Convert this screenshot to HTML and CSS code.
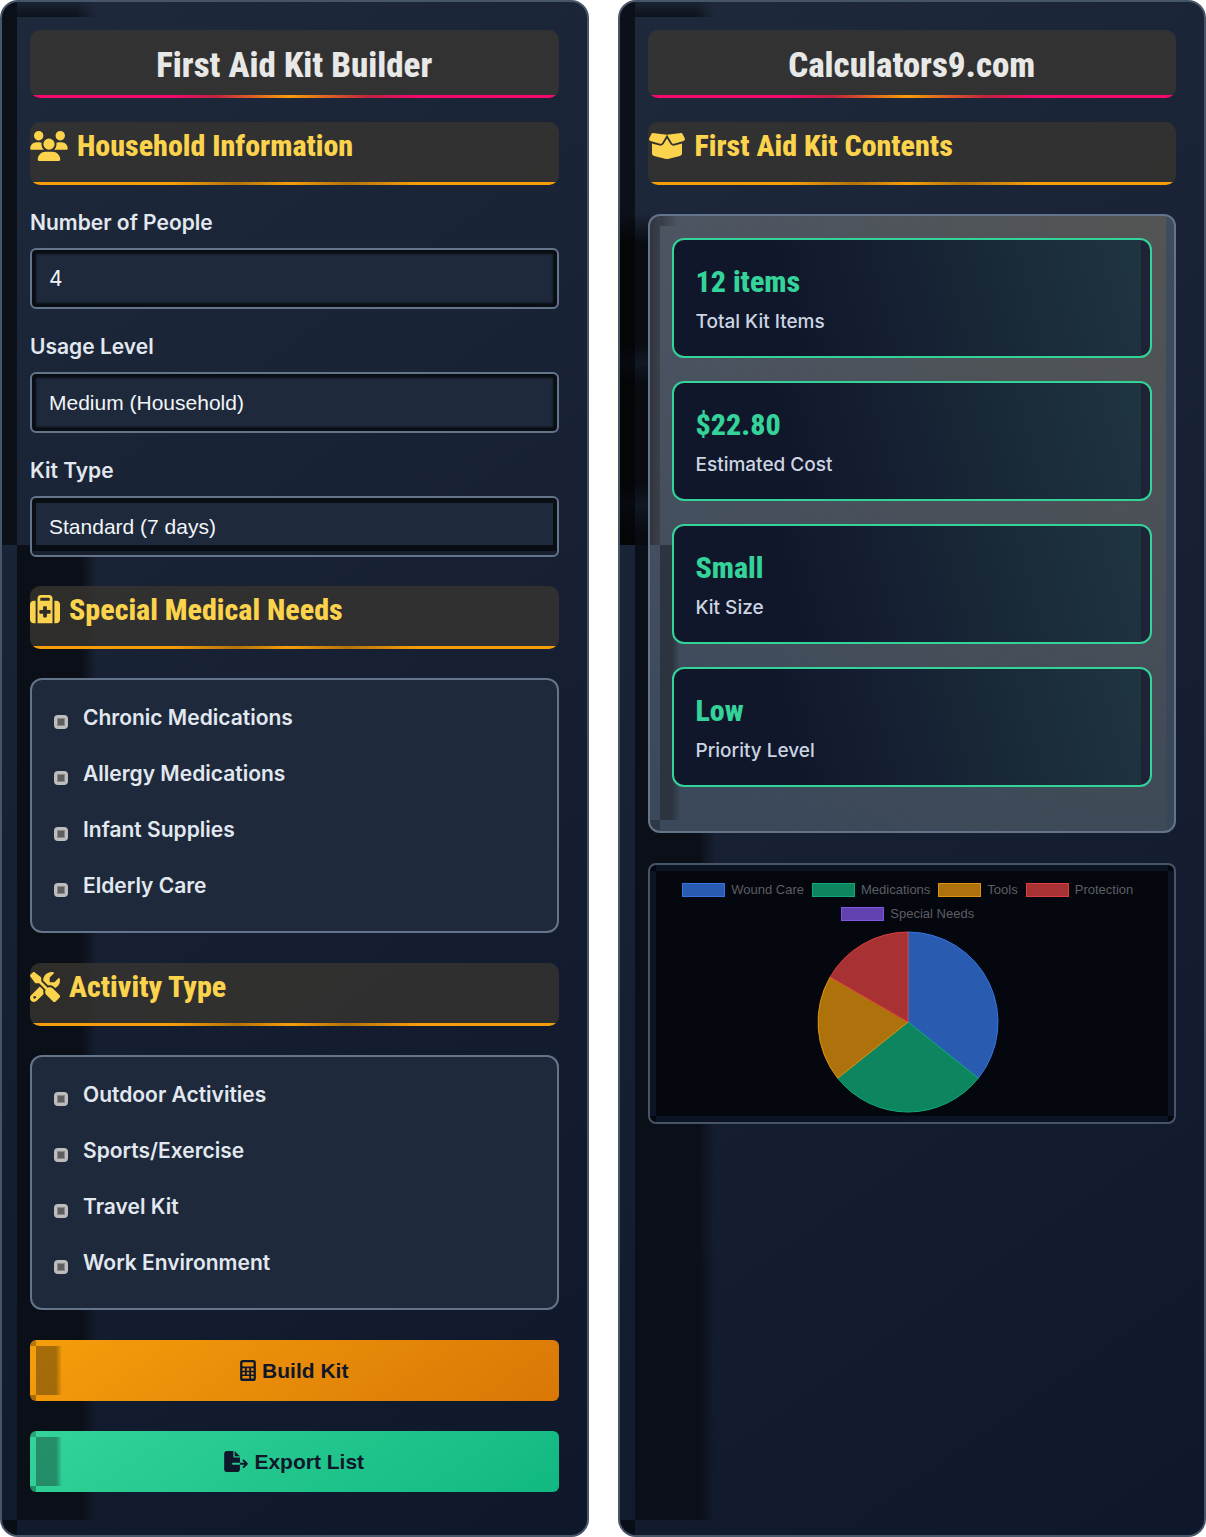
FILE: index.html
```html
<!DOCTYPE html>
<html lang="en">
<head>
    <meta charset="UTF-8">
    <title>First Aid Kit Builder</title>
    <link rel="stylesheet" href="styles.css">
</head>
<body>
<div class="container">
    <form class="panel">
        <h1 class="title">First Aid Kit Builder</h1>
        <h2 class="section-title">
            <svg class="icon icon-wide" viewBox="0 0 640 512"><path d="M144 0a80 80 0 1 1 0 160A80 80 0 1 1 144 0zM512 0a80 80 0 1 1 0 160A80 80 0 1 1 512 0zM0 298.7C0 239.8 47.8 192 106.7 192h42.7c15.9 0 31 3.5 44.6 9.7c-1.3 7.2-1.9 14.7-1.9 22.3c0 38.2 16.8 72.5 43.3 96c-.2 0-.4 0-.7 0H21.3C9.6 320 0 310.4 0 298.7zM405.3 320c-.2 0-.4 0-.7 0c26.6-23.5 43.3-57.8 43.3-96c0-7.6-.7-15-1.9-22.3c13.6-6.3 28.7-9.7 44.6-9.7h42.7C592.2 192 640 239.8 640 298.7c0 11.8-9.6 21.3-21.3 21.3H405.3zM224 224a96 96 0 1 1 192 0 96 96 0 1 1 -192 0zM128 485.3C128 411.7 187.7 352 261.3 352H378.7C452.3 352 512 411.7 512 485.3c0 14.7-11.9 26.7-26.7 26.7H154.7c-14.7 0-26.7-11.9-26.7-26.7z"/></svg>
            Household Information
        </h2>
        <div class="form-group">
            <label for="people">Number of People</label>
            <input class="field" type="text" inputmode="numeric" id="people" value="4">
        </div>
        <div class="form-group">
            <label for="usage">Usage Level</label>
            <select class="field" id="usage">
                <option>Light (Personal)</option>
                <option selected>Medium (Household)</option>
                <option>Heavy (Group)</option>
            </select>
        </div>
        <div class="form-group">
            <label for="kitType">Kit Type</label>
            <select class="field field-last" id="kitType">
                <option>Basic (3 days)</option>
                <option selected>Standard (7 days)</option>
                <option>Extended (14 days)</option>
            </select>
        </div>

        <h2 class="section-title">
            <svg class="icon" viewBox="0 0 512 512"><path d="M184 48H328c4.4 0 8 3.6 8 8V96H176V56c0-4.4 3.6-8 8-8zm-56 8V96v32V480H384V128 96 56c0-30.9-25.1-56-56-56H184c-30.9 0-56 25.1-56 56zM96 96H64C28.7 96 0 124.7 0 160V416c0 35.3 28.7 64 64 64H96V96zM416 480h32c35.3 0 64-28.7 64-64V160c0-35.3-28.7-64-64-64H416V480zM224 208c0-8.8 7.2-16 16-16h32c8.8 0 16 7.2 16 16v48h48c8.8 0 16 7.2 16 16v32c0 8.8-7.2 16-16 16H288v48c0 8.8-7.2 16-16 16H240c-8.8 0-16-7.2-16-16V320H176c-8.8 0-16-7.2-16-16V272c0-8.8 7.2-16 16-16h48V208z"/></svg>
            Special Medical Needs
        </h2>
        <div class="checks">
            <label><input type="checkbox">Chronic Medications</label>
            <label><input type="checkbox">Allergy Medications</label>
            <label><input type="checkbox">Infant Supplies</label>
            <label><input type="checkbox">Elderly Care</label>
        </div>

        <h2 class="section-title">
            <svg class="icon" viewBox="0 0 512 512"><path d="M78.6 5C69.1-2.4 55.6-1.5 47 7L7 47c-8.5 8.5-9.4 22-2.1 31.6l80 104c4.5 5.9 11.6 9.4 19 9.4h54.1l109 109c-14.7 29-10 65.4 14.3 89.6l112 112c12.5 12.5 32.8 12.5 45.3 0l64-64c12.5-12.5 12.5-32.8 0-45.3l-112-112c-24.2-24.2-60.6-29-89.6-14.3l-109-109V104c0-7.5-3.5-14.5-9.4-19L78.6 5zM19.9 396.1C7.2 408.8 0 426.1 0 444.1C0 481.6 30.4 512 67.9 512c18 0 35.3-7.2 48-19.9L233.7 374.3c-7.8-20.9-9-43.6-3.6-65.1l-61.7-61.7L19.9 396.1zM512 144c0-10.5-1.1-20.7-3.2-30.5c-2.4-11.2-16.1-14.1-24.2-6l-63.9 63.9c-3 3-7.1 4.7-11.3 4.7H352c-8.8 0-16-7.2-16-16V102.6c0-4.2 1.7-8.3 4.7-11.3l63.9-63.9c8.1-8.1 5.2-21.8-6-24.2C388.7 1.1 378.5 0 368 0C288.5 0 224 64.5 224 144l0 .8 85.3 85.3c36-9.1 75.8 .5 104 28.7L429 274.5c49-23 83-72.8 83-130.5zM56 432a24 24 0 1 1 48 0 24 24 0 1 1 -48 0z"/></svg>
            Activity Type
        </h2>
        <div class="checks">
            <label><input type="checkbox">Outdoor Activities</label>
            <label><input type="checkbox">Sports/Exercise</label>
            <label><input type="checkbox">Travel Kit</label>
            <label><input type="checkbox">Work Environment</label>
        </div>

        <button class="btn btn-build" type="button">
            <svg class="btn-icon" viewBox="0 0 384 512"><path fill-rule="evenodd" d="M64 0H320a64 64 0 0 1 64 64V448a64 64 0 0 1-64 64H64a64 64 0 0 1-64-64V64A64 64 0 0 1 64 0zM80 56a24 24 0 0 0-24 24v56a24 24 0 0 0 24 24H304a24 24 0 0 0 24-24V80a24 24 0 0 0-24-24zM56 200h60v60H56zM162 200h60v60h-60zM268 200h60v60h-60zM56 296h60v60H56zM162 296h60v60h-60zM268 296h60v60h-60zM56 392h166v60H56zM268 392h60v60h-60z"/></svg>
            Build Kit
        </button>
        <button class="btn btn-export" type="button">
            <svg class="btn-icon btn-icon-wide" viewBox="0 0 576 512"><path d="M0 64C0 28.7 28.7 0 64 0H224V128c0 17.7 14.3 32 32 32H384V288H216c-13.3 0-24 10.7-24 24s10.7 24 24 24H384V448c0 35.3-28.7 64-64 64H64c-35.3 0-64-28.7-64-64V64zM384 336V288H494.1l-39-39c-9.4-9.4-9.4-24.6 0-33.9s24.6-9.4 33.9 0l80 80c9.4 9.4 9.4 24.6 0 33.9l-80 80c-9.4 9.4-24.6 9.4-33.9 0s-9.4-24.6 0-33.9l39-39H384zm0-208H256V0L384 128z"/></svg>
            Export List
        </button>
    </form>

    <div class="panel panel-results">
        <h1 class="title">Calculators9.com</h1>
        <h2 class="section-title">
            <svg class="icon icon-wide" viewBox="0 0 640 512"><path d="M58.9 42.1c3-6.1 9.6-9.6 16.3-8.7L320 64 564.8 33.4c6.7-.8 13.3 2.7 16.3 8.7l41.7 83.4c9 17.9-.6 39.6-19.8 45.1L439.6 217.3c-13.9 4-28.8-1.9-36.2-14.3L320 64 236.6 203c-7.4 12.4-22.3 18.3-36.2 14.3L37.1 170.6c-19.3-5.5-28.8-27.2-19.8-45.1L58.9 42.1zM321.1 128l54.9 91.4c14.9 24.8 44.6 36.6 72.5 28.6L576 211.6v167c0 22-15 41.2-36.4 46.6l-204.1 51c-10.2 2.6-20.9 2.6-31 0l-204.1-51C79 419.7 64 400.5 64 378.5v-167L191.6 248c27.8 8 57.6-3.8 72.5-28.6L318.9 128h2.2z"/></svg>
            First Aid Kit Contents
        </h2>
        <div class="results">
            <div class="card">
                <div class="card-value">12 items</div>
                <div class="card-label">Total Kit Items</div>
            </div>
            <div class="card">
                <div class="card-value">$22.80</div>
                <div class="card-label">Estimated Cost</div>
            </div>
            <div class="card">
                <div class="card-value">Small</div>
                <div class="card-label">Kit Size</div>
            </div>
            <div class="card">
                <div class="card-value">Low</div>
                <div class="card-label">Priority Level</div>
            </div>
        </div>
        <div class="chart">
            <ul class="legend">
                <li><span class="swatch blue"></span>Wound Care</li>
                <li><span class="swatch green"></span>Medications</li>
                <li><span class="swatch orange"></span>Tools</li>
                <li><span class="swatch red"></span>Protection</li>
                <li><span class="swatch purple"></span>Special Needs</li>
            </ul>
            <svg class="pie" viewBox="-91 -91 182 182">
                <path class="blue" d="M0 0V-90A90 90 0 0 1 70.3 56.2z"/>
                <path class="green" d="M0 0L70.3 56.2A90 90 0 0 1 -70.3 56.2z"/>
                <path class="orange" d="M0 0L-70.3 56.2A90 90 0 0 1 -77.9 -45z"/>
                <path class="red" d="M0 0L-77.9 -45A90 90 0 0 1 0 -90z"/>
            </svg>
        </div>
    </div>
</div>
</body>
</html>
```
FILE: styles.css
```css
*{
    margin:0;
    padding:0;
    box-sizing:border-box;
}
body{
    background:#fff;
    color:#e2e8f0;
    font-family:Inter, "Liberation Sans", sans-serif;
}
ul{
    list-style:none;
}
.container{
    display:grid;
    grid-template-columns:1fr 1fr;
    gap:29px;
}
.panel{
    padding:28px 28px 43px;
    border:2px solid #475569;
    border-radius:18px;
    background:
        linear-gradient(#0c1018, #0c1018) 0 0 / 15px 543px no-repeat,
        linear-gradient(90deg, #0b0f17 0, #0b0f17 64px, transparent 80px) 15px 543px / 80px calc(100% - 558px) no-repeat,
        linear-gradient(90deg, transparent 60px, #1d293b 80px) 15px 0 / 80px 15px no-repeat,
        linear-gradient(rgba(12,16,24,0.2), rgba(12,16,24,0.9)) 15px 0 / 80px 15px no-repeat,
        linear-gradient(#090d16, #090d16) 0 100% / 15px 15px no-repeat,
        linear-gradient(145deg, #1e293b, #0f172a);
}
.panel-results{
    background:
        linear-gradient(transparent, rgba(0,0,0,0.7) 30px, rgba(0,0,0,0.7) 130px, rgba(0,0,0,0.35) 150px, rgba(0,0,0,0.7) 170px, rgba(0,0,0,0.7) 270px, rgba(0,0,0,0.35) 292px, rgba(0,0,0,0.7) 320px) 0 211px / 30px 332px no-repeat,
        linear-gradient(#0c1018, #0c1018) 0 0 / 15px 543px no-repeat,
        linear-gradient(90deg, #0b0f17 0, #0b0f17 64px, transparent 80px) 15px 543px / 80px calc(100% - 558px) no-repeat,
        linear-gradient(90deg, transparent 60px, #1d293b 80px) 15px 0 / 80px 15px no-repeat,
        linear-gradient(rgba(12,16,24,0.2), rgba(12,16,24,0.9)) 15px 0 / 80px 15px no-repeat,
        linear-gradient(#090d16, #090d16) 0 100% / 15px 15px no-repeat,
        linear-gradient(145deg, #1e293b, #0f172a);
}
.title{
    margin-bottom:24px;
    padding:16px 0 12px;
    border-radius:10px;
    background:
        linear-gradient(90deg, #f5086f 27%, #c0243f 35%, #f59e0b 49%, #c0243f 64%, #f5086f 73%) 0 100% / 100% 3px no-repeat,
        rgba(55,53,50,0.85);
    color:#e8e8e6;
    font:800 35px/40px "Roboto Condensed", Roboto, sans-serif;
    text-align:center;
}
.section-title{
    display:flex;
    align-items:center;
    gap:9px;
    margin-bottom:29px;
    padding:6px 0 21px;
    border-radius:10px;
    background:
        linear-gradient(90deg, #f59e0b 27%, #b3730a 39%, #f59e0b 49%, #b3730a 60%, #f59e0b 73%) 0 100% / 100% 3px no-repeat,
        rgba(55,52,47,0.8);
    color:#fcd34d;
    font:800 30px/36px "Roboto Condensed", Roboto, sans-serif;
}
.icon{
    width:30px;
    height:30px;
    fill:currentColor;
}
.icon-wide{
    width:38px;
}
.form-group{
    margin-bottom:29px;
}
.form-group label{
    display:block;
    margin-bottom:16px;
    font-size:21px;
    font-weight:600;
    line-height:18px;
}
.field{
    display:block;
    width:100%;
    height:61px;
    padding:0 17px;
    border:2px solid #64748b;
    border-radius:6px;
    background:#1e293b;
    box-shadow:inset 0 0 2px 4px #090e14;
    color:#f1f5f9;
    font:21px "Liberation Sans", sans-serif;
    appearance:none;
}
input.field{
    font-family:Inter, sans-serif;
}
.field-last{
    background:
        linear-gradient(#18202f, #18202f) 0 100% / 100% 4px no-repeat,
        linear-gradient(#090e14, #090e14) 0 0 / 100% 5px no-repeat,
        linear-gradient(#090e14, #090e14) 0 47px / 100% 6px no-repeat,
        linear-gradient(#090e14, #090e14) 0 0 / 4px 100% no-repeat,
        linear-gradient(#090e14, #090e14) 100% 0 / 4px 100% no-repeat,
        #1e293b;
    box-shadow:none;
}
.checks{
    display:flex;
    flex-direction:column;
    gap:30px;
    margin-bottom:30px;
    padding:25px 22px 32px;
    border:2px solid #64748b;
    border-radius:12px;
    background:#1e293b;
}
.checks label{
    display:flex;
    align-items:center;
    gap:15px;
    font-size:21px;
    font-weight:600;
    line-height:26px;
}
.checks input{
    width:14px;
    height:14px;
    margin-top:8px;
    border:3px solid #bdbdbd;
    border-radius:4px;
    background:#5e5e5e;
    box-shadow:inset 0 0 0 1px #8a8a8a;
    appearance:none;
}
.btn{
    display:flex;
    align-items:center;
    justify-content:center;
    gap:6px;
    width:100%;
    height:61px;
    border:0;
    border-radius:6px;
    color:#0f172a;
    font:bold 21px "Liberation Sans", sans-serif;
    cursor:pointer;
}
.btn + .btn{
    margin-top:30px;
}
.btn-build{
    background:
        linear-gradient(90deg, rgba(70,50,10,0.45) 20px, transparent 26px) 6px 6px / 28px 49px no-repeat,
        linear-gradient(rgba(70,50,10,0.35), rgba(70,50,10,0.35)) 0 0 / 6px 6px no-repeat,
        linear-gradient(rgba(70,50,10,0.45), rgba(70,50,10,0.45)) 0 100% / 6px 6px no-repeat,
        linear-gradient(145deg, #f59e0b, #d97706);
}
.btn-export{
    background:
        linear-gradient(90deg, rgba(20,60,50,0.45) 20px, transparent 26px) 6px 6px / 28px 49px no-repeat,
        linear-gradient(rgba(20,60,50,0.3), rgba(20,60,50,0.3)) 0 0 / 6px 6px no-repeat,
        linear-gradient(rgba(20,60,50,0.45), rgba(20,60,50,0.45)) 0 100% / 6px 6px no-repeat,
        linear-gradient(145deg, #34d399, #10b981);
}
.btn-icon{
    width:16px;
    height:21px;
    fill:currentColor;
}
.btn-icon-wide{
    width:24px;
}
.results{
    display:flex;
    flex-direction:column;
    gap:23px;
    margin-bottom:30px;
    padding:22px 22px 44px;
    border:2px solid #64748b;
    border-radius:12px;
    background:
        linear-gradient(#3f4b5f, #384659) 100% 0 / 8px 100% no-repeat,
        linear-gradient(90deg, #30343c, #3a414c) 0 0 / 10px 329px no-repeat,
        linear-gradient(90deg, rgba(45,50,58,0.7), transparent) 10px 0 / 18px 10px no-repeat,
        linear-gradient(90deg, #2c3440 12px, transparent 20px) 10px 329px / 20px calc(100% - 340px) no-repeat,
        linear-gradient(#2f3845, #2f3845) 0 100% / 10px 11px no-repeat,
        radial-gradient(ellipse at 100% 0, rgba(90,84,70,0.6), rgba(90,84,70,0) 90%),
        linear-gradient(#4a5567, #3a485a);
}
.card{
    padding:22px 22px 21px;
    border:2px solid #34d399;
    border-radius:12px;
    background:
        linear-gradient(#1e2337, #1e2337) 100% 0 / 9px 100% no-repeat,
        linear-gradient(75deg, #11172b 25%, #1f3641);
}
.card-value{
    margin-bottom:7px;
    color:#34d399;
    font:800 30px/40px "Roboto Condensed", Roboto, sans-serif;
}
.card-label{
    color:#cbd5e1;
    font-size:19px;
    font-weight:500;
    line-height:26px;
}
.chart{
    padding:13px 28px 9px 20px;
    border:2px solid #475569;
    border-radius:8px;
    background:
        linear-gradient(#0c1424, #0c1424) 50% 0 / calc(100% - 12px) 6px no-repeat,
        linear-gradient(#0c1424, #0c1424) 50% 100% / calc(100% - 12px) 6px no-repeat,
        linear-gradient(#0c1424, #0c1424) 0 50% / 6px calc(100% - 12px) no-repeat,
        linear-gradient(#0c1424, #0c1424) 100% 50% / 6px calc(100% - 12px) no-repeat,
        #04070e;
}
.legend{
    display:flex;
    flex-wrap:wrap;
    justify-content:center;
    column-gap:8px;
    color:#5c5e62;
    font:13px/24px "Liberation Sans", sans-serif;
}
.legend li{
    display:flex;
    align-items:center;
    gap:6px;
}
.swatch{
    width:43px;
    height:14px;
    border:1px solid;
}
.pie{
    display:block;
    width:182px;
    margin:5px auto 0;
}
.blue{
    background:#295bb0;
    border-color:#3574e2;
    fill:#295bb0;
    stroke:#3574e2;
}
.green{
    background:#0d855f;
    border-color:#10a876;
    fill:#0d855f;
    stroke:#10a876;
}
.orange{
    background:#ad720b;
    border-color:#e0930c;
    fill:#ad720b;
    stroke:#e0930c;
}
.red{
    background:#a83233;
    border-color:#dc3f40;
    fill:#a83233;
    stroke:#dc3f40;
}
.purple{
    background:#6242ae;
    border-color:#7f56e0;
}
```
